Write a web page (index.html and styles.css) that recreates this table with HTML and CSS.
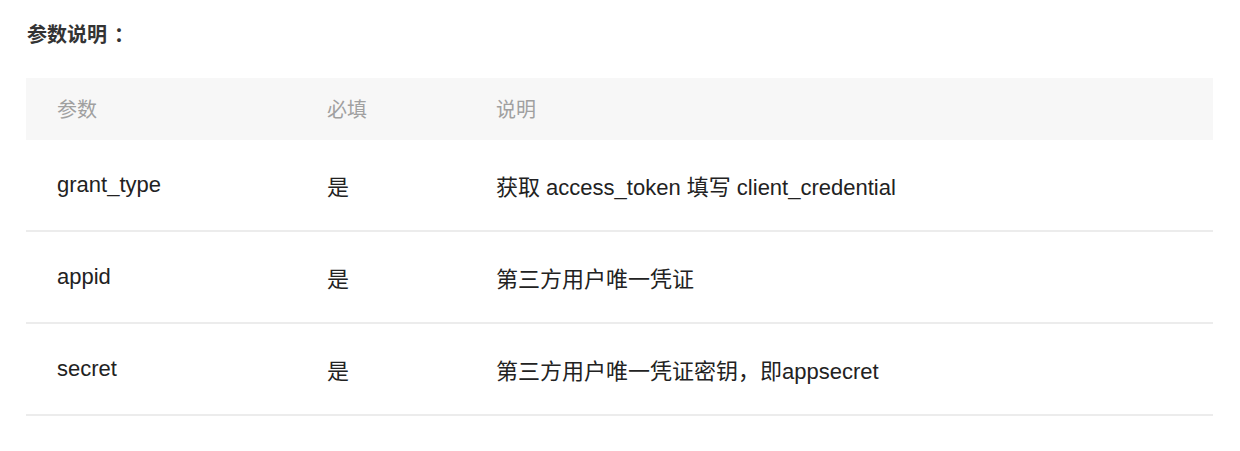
FILE: index.html
```html
<!DOCTYPE html>
<html lang="zh-CN">
<head>
<meta charset="utf-8">
<title>参数说明</title>
<link rel="stylesheet" href="styles.css">
</head>
<body>
<div class="page">
  <h3 class="title">参数说明<span class="colon">：</span></h3>
  <table class="params">
    <thead>
      <tr><th class="c1">参数</th><th class="c2">必填</th><th class="c3">说明</th></tr>
    </thead>
    <tbody>
      <tr><td>grant_type</td><td>是</td><td>获取 access_token 填写 client_credential</td></tr>
      <tr><td>appid</td><td>是</td><td>第三方用户唯一凭证</td></tr>
      <tr><td>secret</td><td>是</td><td>第三方用户唯一凭证密钥，即appsecret</td></tr>
    </tbody>
  </table>
</div>
</body>
</html>
```
FILE: styles.css
```css
html, body {
  margin: 0;
  padding: 0;
  background: #ffffff;
}
body {
  font-family: "Liberation Sans", "Noto Sans CJK SC", sans-serif;
  color: #222222;
}
.page {
  padding: 22px 27px 0 26px;
}
.title {
  margin: 0 0 0 1px;
  font-size: 20px;
  font-weight: bold;
  line-height: 26px;
  color: #333333;
}
.title .colon {
  margin-left: 7px;
}
.params {
  margin-top: 30px;
  width: 1187px;
  border-collapse: collapse;
  table-layout: fixed;
}
.params th {
  background: #f7f7f7;
  height: 60px;
  padding: 0 0 2px 31px;
  text-align: left;
  font-weight: normal;
  font-size: 20px;
  color: #a0a0a0;
}
.params .c1 { width: 239px; }
.params .c2 { width: 138px; }
.params td {
  height: 90px;
  padding: 0 0 0 31px;
  font-size: 22px;
  color: #222222;
  border-bottom: 2px solid #ececec;
  vertical-align: middle;
}
```
